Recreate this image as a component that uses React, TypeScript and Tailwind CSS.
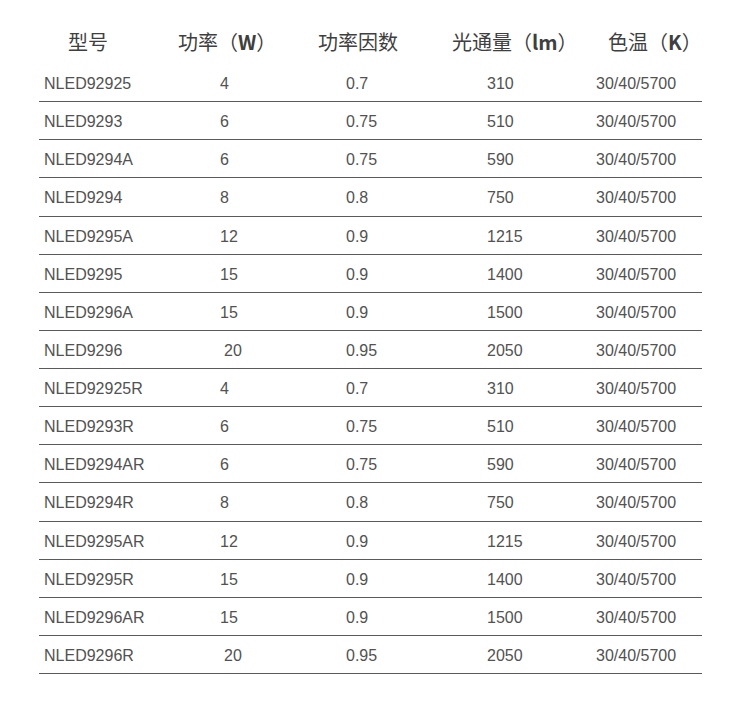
const rows: [string, string, string, string][] = [
  ["NLED92925", "4", "0.7", "310"],
  ["NLED9293", "6", "0.75", "510"],
  ["NLED9294A", "6", "0.75", "590"],
  ["NLED9294", "8", "0.8", "750"],
  ["NLED9295A", "12", "0.9", "1215"],
  ["NLED9295", "15", "0.9", "1400"],
  ["NLED9296A", "15", "0.9", "1500"],
  ["NLED9296", "20", "0.95", "2050"],
  ["NLED92925R", "4", "0.7", "310"],
  ["NLED9293R", "6", "0.75", "510"],
  ["NLED9294AR", "6", "0.75", "590"],
  ["NLED9294R", "8", "0.8", "750"],
  ["NLED9295AR", "12", "0.9", "1215"],
  ["NLED9295R", "15", "0.9", "1400"],
  ["NLED9296AR", "15", "0.9", "1500"],
  ["NLED9296R", "20", "0.95", "2050"],
];

export default function App() {
  return (
    <div className="w-[737px] h-[705px] bg-white pt-[20px] pl-[39px]">
      <div className="w-[663px]">
        {/* header */}
        <div className="flex items-center h-[44px] text-[20px] text-[#3f3f3f] font-[family-name:Noto_Sans_CJK_SC,sans-serif]">
          <div className="w-[139px] pl-[29px]">型号</div>
          <div className="w-[140px]">
            功率（<span className="font-semibold">W</span>）
          </div>
          <div className="w-[134px]">功率因数</div>
          <div className="w-[156px]">
            光通量（<span className="font-semibold">lm</span>）
          </div>
          <div>
            色温（<span className="font-semibold">K</span>）
          </div>
        </div>

        {/* rows */}
        <div className="text-[16px] text-[#525252] font-[family-name:Liberation_Sans,Arial,sans-serif]">
          {rows.map(([model, watt, pf, lm]) => (
            <div
              key={model}
              className="flex items-center h-[38.13px] pt-[3px] border-b border-[#5a5a5a]"
            >
              <div className="w-[180px] pl-[5px]">{model}</div>
              <div className={watt === "20" ? "w-[127px] pl-[5px]" : "w-[127px] pl-[1px]"}>{watt}</div>
              <div className="w-[141px]">{pf}</div>
              <div className="w-[109px]">{lm}</div>
              <div>30/40/5700</div>
            </div>
          ))}
        </div>
      </div>
    </div>
  );
}
